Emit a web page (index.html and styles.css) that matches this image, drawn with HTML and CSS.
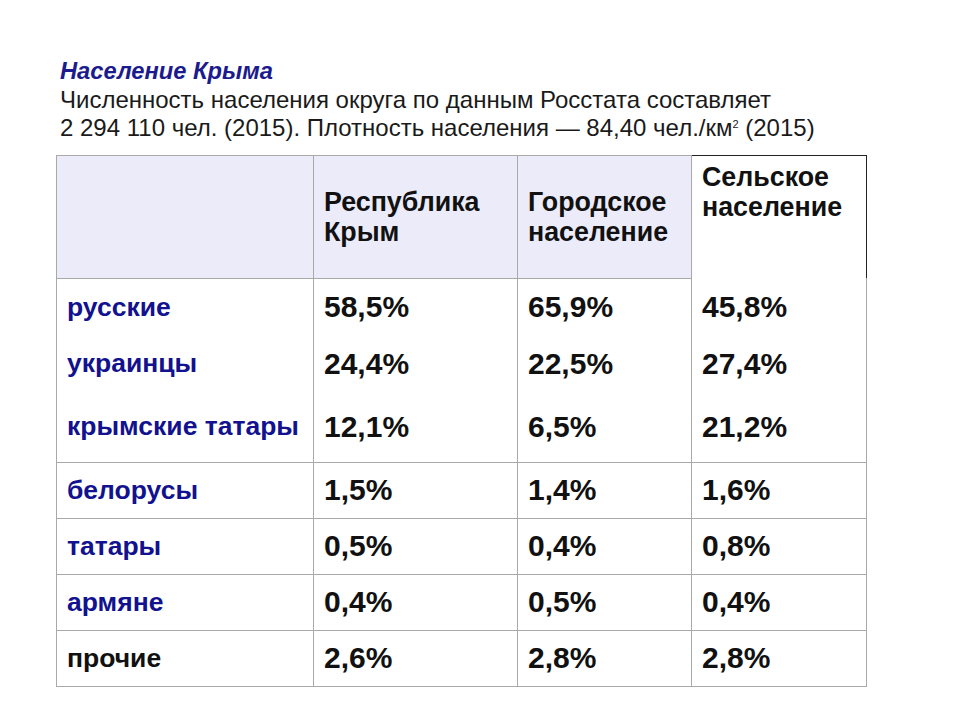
FILE: index.html
```html
<!DOCTYPE html>
<html lang="ru">
<head>
<meta charset="utf-8">
<link rel="stylesheet" href="styles.css">
</head>
<body>
<div class="page">
  <div class="intro">
    <div class="title">Население Крыма</div>
    <div class="text">Численность населения округа по данным Росстата составляет<br>2 294 110 чел. (2015). Плотность населения — 84,40 чел./км<sup>2</sup> (2015)</div>
  </div>
  <table class="pop">
    <colgroup>
      <col class="c1"><col class="c2"><col class="c3"><col class="c4">
    </colgroup>
    <thead>
      <tr class="head">
        <th class="empty"></th>
        <th>Республика<br>Крым</th>
        <th>Городское<br>население</th>
        <th class="rural">Сельское<br>население</th>
      </tr>
    </thead>
    <tbody>
      <tr class="g g1"><td class="lbl">русские</td><td>58,5%</td><td>65,9%</td><td>45,8%</td></tr>
      <tr class="g g2"><td class="lbl">украинцы</td><td>24,4%</td><td>22,5%</td><td>27,4%</td></tr>
      <tr class="g g3"><td class="lbl">крымские татары</td><td>12,1%</td><td>6,5%</td><td>21,2%</td></tr>
      <tr class="r"><td class="lbl">белорусы</td><td>1,5%</td><td>1,4%</td><td>1,6%</td></tr>
      <tr class="r"><td class="lbl">татары</td><td>0,5%</td><td>0,4%</td><td>0,8%</td></tr>
      <tr class="r"><td class="lbl">армяне</td><td>0,4%</td><td>0,5%</td><td>0,4%</td></tr>
      <tr class="r"><td class="lbl other">прочие</td><td>2,6%</td><td>2,8%</td><td>2,8%</td></tr>
    </tbody>
  </table>
</div>
</body>
</html>
```

FILE: styles.css
```css
html, body {
  margin: 0;
  padding: 0;
  background: #ffffff;
}
body {
  font-family: "Liberation Sans", Arial, sans-serif;
  color: #111;
}
.page {
  padding: 57px 0 0 56px;
}
.intro {
  padding-left: 4px;
  margin-bottom: 12px;
}
.title {
  font-size: 23.7px;
  line-height: 28.5px;
  font-weight: bold;
  font-style: italic;
  color: #1b1b8e;
}
.text {
  font-size: 24px;
  line-height: 28.5px;
  color: #1a1a1a;
}
.text sup {
  font-size: 11px;
  line-height: 0;
  vertical-align: 8px;
}
.pop {
  border-collapse: collapse;
  table-layout: fixed;
  width: 810px;
}
.c1 { width: 257px; }
.c2 { width: 204px; }
.c3 { width: 174px; }
.c4 { width: 175px; }
.pop th, .pop td {
  border: 1px solid #a9a9a9;
  padding: 0 0 0 10px;
  text-align: left;
}
.head th {
  height: 122px;
  background: #ebebf9;
  font-size: 26.8px;
  line-height: 30px;
  font-weight: bold;
  color: #111;
  vertical-align: middle;
}
.head th.rural {
  height: 116px;
  background: #fff;
  vertical-align: top;
  padding-top: 6px;
  border-top: 1px solid #222;
  border-right: 1px solid #222;
  border-bottom: none;
}
.pop td {
  font-size: 30px;
  font-weight: bold;
  color: #111;
  vertical-align: middle;
}
.pop td.lbl {
  font-size: 26.5px;
  color: #12128f;
}
.pop td.lbl.other {
  color: #111;
}
.g td { border-top: none; border-bottom: none; }
.g1 td { height: 57px; }
.g2 td { height: 56px; }
.g3 td { height: 70px; border-bottom: 1px solid #a9a9a9; }
.r td { height: 55px; }
```
